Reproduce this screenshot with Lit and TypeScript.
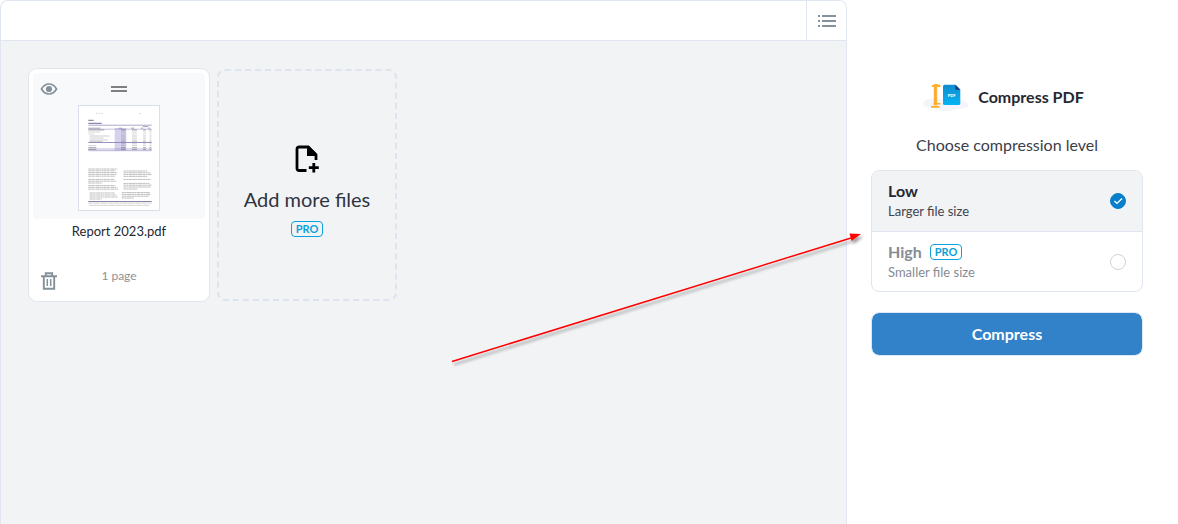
import { LitElement, html, svg, css } from "lit";
import { customElement, state } from "lit/decorators.js";

type Level = "low" | "high";

// Rows of the previewed report's table: baseline, label width, strength.
const tableRows: [number, number, number][] = [
  [25, 16, 0.45], [27, 12, 0.22], [29, 6, 0.18], [31, 20, 0.28], [33, 14, 0.25],
  [35, 18, 0.28], [36.4, 13, 0.28], [38.8, 0, 0.26], [40.6, 8, 0.25], [42.6, 8, 0.45], [44.4, 8, 0.45],
];
const leftLines = [64, 65.8, 67.6, 69.4, 71.2, 74.4, 76.2, 78, 80.6, 82.4, 84.2, 88, 90, 92, 94];
const rightLines = [66, 67.8, 69.6, 71.4, 74.4, 78.4, 80.2, 82, 84, 87.6, 89.4, 91.2, 93];

@customElement("page-thumbnail")
export class PageThumbnail extends LitElement {
  static styles = css`
    :host { display: block; }
    .page { display: block; box-sizing: border-box; width: 82px; height: 106px; border: 1px solid #dbdeeb; background: #fff; }
  `;

  render() {
    return html`<svg class="page" viewBox="1 1 80 104" role="img" aria-label="First page preview">
      <path d="M18 8.4h7M61 8.4h3" stroke="#bbb" stroke-width=".6" stroke-dasharray="1 .5" />
      <rect x="36.7" y="23" width="11.6" height="22.6" fill="#d6d1ec" />
      <rect x="10.3" y="43" width="63.4" height="2.6" fill="#8d83bd" opacity=".3" />
      <path d="M10.3 15.3h5.4" stroke="#666" stroke-width=".9" />
      <path d="M10.3 18.3h13.4" stroke="#746c9f" stroke-width="1" />
      <path d="M10.3 20.2h63.4" stroke="#8a81b8" stroke-width=".7" />
      <path d="M65 21.6h5M10.3 23.2h12M41 23.2h3M53 23.2h3M63 23.2h2M70 23.2h2" stroke="#8b84b0" stroke-width=".8" />
      <path d="M10.3 24.2h63.4M10.3 45.7h63.4" stroke="#9c94c6" stroke-width=".6" />
      <path d="M10.3 37.5h63.4" stroke="#8b82bc" stroke-width=".9" />
      ${tableRows.map(([y, w, o], i) => svg`
        <path d="M${i > 2 && i < 7 ? 11.6 : 10.3} ${y}h${w}M43 ${y}h4.6M54 ${y}h5M65 ${y}h3M71.5 ${y}h2"
          stroke="#39363f" stroke-width=".9" opacity=${o} />`)}
      ${leftLines.map((y, i) => svg`
        <path d="M${i > 10 ? 11.6 : 10.3} ${y}h${[29, 27, 29, 28, 27, 26, 28, 14, 27, 29, 30, 25, 27, 28, 12][i]}"
          stroke="#444" stroke-width="1" stroke-dasharray="3.3 .3 2.1 .3 1.2 .3" opacity=".35" />`)}
      ${rightLines.map((y, i) => svg`
        <path d="M${i < 9 ? 45.5 : 43.8} ${y}h${[24, 27, 28, 24, 27, 26, 28, 27, 14, 28, 29, 27, 12][i]}"
          stroke="#444" stroke-width="1" stroke-dasharray="2.8 .3 1.7 .3 4.1 .3" opacity=".35" />`)}
      <path d="M10.3 96.5h63.4" stroke="#8a82aa" stroke-width="1" />
      <path d="M10.3 98.1h63.4M11.6 100.3h60" stroke="#555" stroke-width=".7" stroke-dasharray="4 .5 2 .3" opacity=".4" />
    </svg>`;
  }
}

@customElement("app-root")
export class AppRoot extends LitElement {
  static styles = css`
    :host {
      display: block;
      font-family: Lato, "Open Sans", sans-serif;
      color: #252832;
    }
    * { box-sizing: border-box; }
    svg { display: block; }
    button { font: inherit; color: inherit; border: 0; padding: 0; background: none; cursor: pointer; }
    .shell {
      position: relative;
      display: grid;
      grid-template-columns: minmax(0, 1fr) 331px;
      min-height: 100vh;
      overflow: hidden;
      background: #fff;
    }
    .workspace {
      display: flex;
      flex-direction: column;
      border: 1px solid #dfe6f0;
      border-bottom: 0;
      border-radius: 8px 8px 0 0;
      background: #f1f3f5;
      overflow: hidden;
    }
    .toolbar {
      display: flex;
      justify-content: flex-end;
      height: 40px;
      border-bottom: 1px solid #dfe6f0;
      background: #fff;
    }
    .view { display: grid; place-items: center; width: 40px; border-left: 1px solid #dfe6f0; }
    .files { display: flex; flex-wrap: wrap; gap: 8px; padding: 28px; }
    .file {
      display: flex;
      flex-direction: column;
      width: 180px;
      height: 232px;
      padding: 4px;
      border-radius: 8px;
      background: #fff;
      box-shadow: 0 0 0 1px #e2e6eb;
      text-align: center;
    }
    .preview {
      display: grid;
      grid-template-columns: 32px 1fr 32px;
      grid-template-rows: 32px auto;
      justify-items: center;
      align-items: center;
      height: 146px;
      align-content: start;
      border-radius: 4px;
      background: #f8f9fb;
    }
    .preview page-thumbnail { grid-column: 1 / -1; }
    .name { font-size: 13px; line-height: 24px; }
    .details {
      display: grid;
      grid-template-columns: 32px 1fr 32px;
      align-items: center;
      justify-items: center;
      margin-top: auto;
      height: 32px;
    }
    .pages { font-size: 12px; line-height: 16px; margin-bottom: 10px; color: #8e8f93; }
    .add {
      display: flex;
      flex-direction: column;
      align-items: center;
      justify-content: center;
      width: 180px;
      height: 232px;
      padding-top: 12px;
      border: 2px dashed #dde4ed;
      border-radius: 8px;
    }
    .add-label { margin: 14px 0 10px; font-size: 20px; line-height: 24px; color: #303440; }
    .pro {
      padding: 0 4px;
      border: 1px solid #0aa2dc;
      border-radius: 4px;
      font-size: 11px;
      line-height: 14px;
      font-weight: 700;
      color: #0aa2dc;
    }
    .panel { padding: 77px 35px 24px 24px; }
    .title {
      display: flex;
      align-items: center;
      justify-content: center;
      gap: 10px;
      margin: 0;
      padding-right: 8px;
      font-size: 16px;
      line-height: 40px;
      font-weight: 700;
    }
    .levels { margin: 0; padding: 0; border: 0; min-width: 0; }
    .prompt {
      width: 100%;
      padding: 16px 0 13px;
      text-align: center;
      font-size: 16px;
      line-height: 24px;
      color: #3c404a;
    }
    .options { border: 1px solid #dfe6f0; border-radius: 8px; overflow: hidden; }
    .option {
      display: flex;
      align-items: center;
      justify-content: space-between;
      height: 60px;
      padding: 0 16px;
      cursor: pointer;
      color: #868c93;
    }
    .option + .option { border-top: 1px solid #dfe6f0; }
    .option.chosen { background: #f1f3f5; color: #252832; }
    .level { display: flex; align-items: center; gap: 8px; font-size: 16px; line-height: 20px; font-weight: 700; }
    .hint { display: block; font-size: 13px; line-height: 20px; }
    .chosen .hint { color: #41454e; }
    .pick { display: grid; }
    .pick > * { grid-area: 1 / 1; width: 16px; height: 16px; }
    input { appearance: none; margin: 0; border: 1px solid #cfd2d7; border-radius: 50%; background: #fff; }
    input:checked { border-color: #087fcb; background: #087fcb; }
    .tick { pointer-events: none; }
    .compress {
      width: 100%;
      height: 44px;
      margin-top: 20px;
      padding-bottom: 2px;
      border: 1px solid #dce8f4;
      border-radius: 8px;
      background: #3182c8;
      background-clip: padding-box;
      color: #fff;
      font-size: 16px;
      font-weight: 700;
    }
    .pointer {
      position: absolute;
      top: 225px;
      right: 303px;
      width: 430px;
      height: 150px;
      pointer-events: none;
    }
  `;

  @state() private level: Level = "low";

  private option(id: Level, name: string, hint: string, pro: boolean) {
    const chosen = this.level === id;
    return html`<label class="option ${chosen ? "chosen" : ""}">
      <span>
        <span class="level">${name}${pro ? html`<span class="pro">PRO</span>` : ""}</span>
        <span class="hint">${hint}</span>
      </span>
      <span class="pick">
        <input type="radio" name="level" .checked=${chosen} @change=${() => (this.level = id)} />
        ${chosen ? html`<svg class="tick" viewBox="0 0 16 16" fill="none" stroke="#fff" stroke-width="1.4">
          <path d="M4.4 8 7 10.4 12 5.5" /></svg>` : ""}
      </span>
    </label>`;
  }

  render() {
    return html`<div class="shell">
      <main class="workspace">
        <div class="toolbar">
          <button class="view" aria-label="List view">
            <svg width="18" height="12" fill="#84929d" shape-rendering="crispEdges">
              <path d="M0 0h2v2H0zM4 0h14v2H4zM0 5h2v2H0zM4 5h14v2H4zM0 10h2v2H0zM4 10h14v2H4z" />
            </svg>
          </button>
        </div>
        <div class="files">
          <article class="file">
            <div class="preview">
              <button aria-label="Preview">
                <svg width="18" height="12" viewBox="0 0 18 12">
                  <path d="M1.5 6Q4.3 1 9 1t7.5 5q-2.8 5-7.5 5T1.5 6Z" fill="none" stroke="#84919b" stroke-width="1.7" />
                  <circle cx="9" cy="6" r="3.1" fill="#84919b" />
                </svg>
              </button>
              <svg width="16" height="6" fill="#7d7f82" shape-rendering="crispEdges">
                <path d="M0 0h16v2H0zM0 4h16v2H0z" />
              </svg>
              <span></span>
              <page-thumbnail></page-thumbnail>
            </div>
            <span class="name">Report 2023.pdf</span>
            <div class="details">
              <button aria-label="Delete">
                <svg width="16" height="18" viewBox="0 0 16 18" fill="none" stroke="#84919b" stroke-width="1.9">
                  <path d="M0 4.2h16M4.8 4V1.2h6.4V4M2.8 4v12.8h10.4V4" />
                  <path d="M6.3 7v7M9.7 7v7" stroke-width="1.5" />
                </svg>
              </button>
              <span class="pages">1 page</span>
            </div>
          </article>
          <button class="add">
            <svg width="26" height="28" viewBox="0 0 26 28">
              <path d="M12.5 25.5H5a2 2 0 0 1-2-2V4a2 2 0 0 1 2-2h9.2l7.8 7.8V15" fill="none" stroke="#000" stroke-width="2.8" />
              <path d="M13 1h2l8 8v2H13z" />
              <path d="M18.4 18h2.8v3.2h3.6V24h-3.6v3.6h-2.8V24h-3.6v-2.8h3.6z" />
            </svg>
            <span class="add-label">Add more files</span>
            <span class="pro">PRO</span>
          </button>
        </div>
      </main>
      <aside class="panel">
        <h1 class="title">
          <svg width="46" height="32" viewBox="-1 0 46 32" aria-hidden="true">
            <defs>
              <linearGradient id="sheet" x2="0" y2="1">
                <stop stop-color="#118ccf" /><stop offset="1" stop-color="#04b5f3" />
              </linearGradient>
            </defs>
            <path d="M0 23c0-5 8-6 15-5 9 1 13 0 20 1 7 0 11 3 10 6s-9 2-15 4-13 1-17-1S0 27 0 23Z" fill="#f3f5fa" />
            <g transform="translate(1 1.5)">
              <path d="M9.8 3h3.4v20H9.800z" fill="#ffb33c" />
              <path d="M8 3q2-2 4.500-1.400l3.900 1v1.900H8zM9.500 20.600h6.900v1.500H9.500zM7 23.600h8.500v1.600H7z" fill="#ffad2c" />
              <path d="M11.2 5v16" stroke="#f79b2a" stroke-dasharray="1.4 1" />
            </g>
            <g transform="translate(1.4 2)">
              <path d="M20.2 1.8h10.900l4.800 4.800v13.900a1.600 1.600 0 0 1-1.600 1.600H20.200a1.600 1.600 0 0 1-1.600-1.600V3.400A1.600 1.600 0 0 1 20.200 1.800Z" fill="url(#sheet)" />
              <path d="M30.9 1.8v5h5z" fill="#1d3c7c" />
              <text x="27.3" y="13.8" text-anchor="middle" font-size="4" font-weight="900" fill="#fff">PDF</text>
            </g>
          </svg>
          <span>Compress PDF</span>
        </h1>
        <fieldset class="levels">
          <legend class="prompt">Choose compression level</legend>
          <div class="options">
            ${this.option("low", "Low", "Larger file size", false)}
            ${this.option("high", "High", "Smaller file size", true)}
          </div>
        </fieldset>
        <button class="compress">Compress</button>
      </aside>
      <svg class="pointer" viewBox="0 0 430 150" aria-hidden="true">
        <defs>
          <filter id="shade" x="-5%" y="-5%" width="110%" height="120%">
            <feDropShadow dx="2" dy="3" stdDeviation="1.5" flood-color="#000" flood-opacity=".38" />
          </filter>
        </defs>
        <g filter="url(#shade)">
          <path d="M7 136.5 406 13" fill="none" stroke="#f00" stroke-width="1.5" />
          <path d="M416 9 404.5 8.6 406.5 16z" fill="#f00" />
        </g>
      </svg>
    </div>`;
  }
}
